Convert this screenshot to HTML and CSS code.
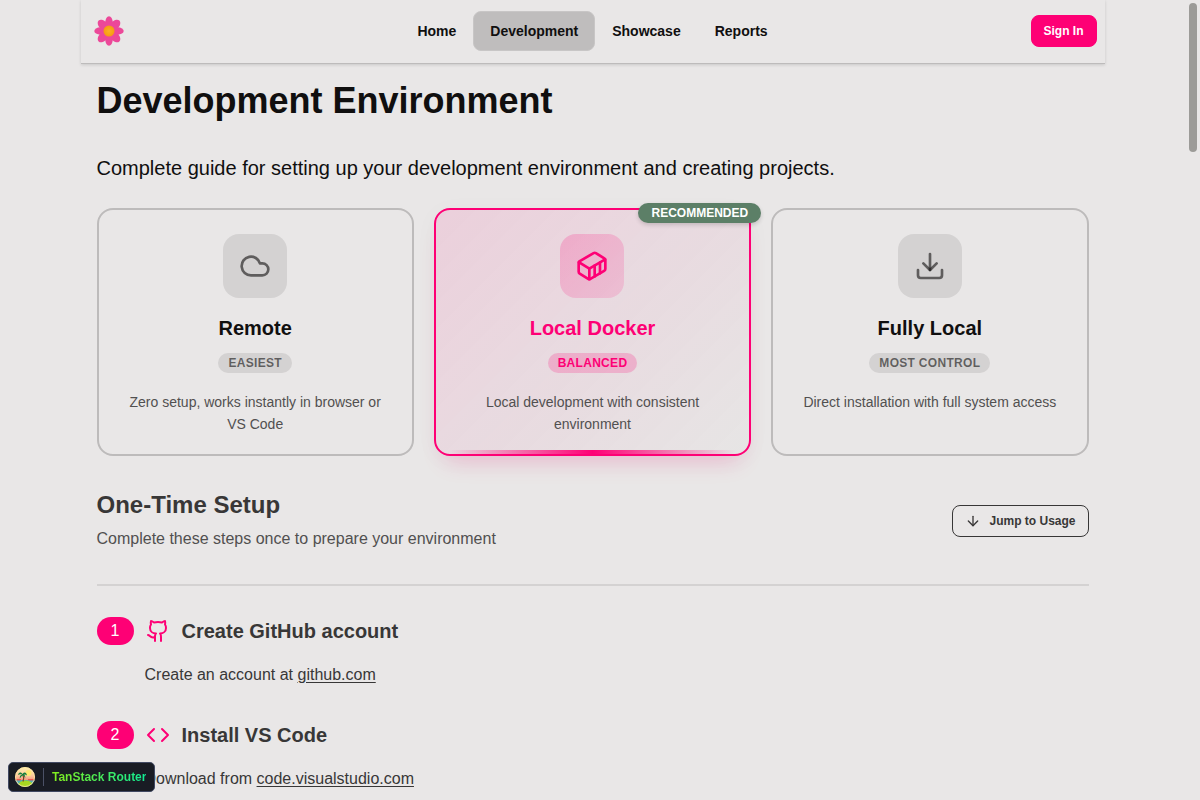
FILE: index.html
```html
<!DOCTYPE html>
<html lang="en">
<head>
<meta charset="utf-8">
<meta name="viewport" content="width=device-width, initial-scale=1">
<title>Development Environment</title>
<link rel="stylesheet" href="styles.css">
</head>
<body>
<div class="shell">
  <header class="navbar">
    <a class="logo" href="#" aria-label="Home page">
      <svg width="32" height="32" viewBox="0 0 32 32" aria-hidden="true">
        <defs>
          <radialGradient id="core"><stop offset="0" stop-color="#fbb024"/><stop offset="1" stop-color="#f79a12"/></radialGradient>
        </defs>
        <g fill="#ec4899">
          <ellipse cx="16" cy="7.300" rx="3.700" ry="6"/>
          <ellipse cx="16" cy="7.300" rx="4.200" ry="6" transform="rotate(45 16 16)"/>
          <ellipse cx="16" cy="7.300" rx="3.700" ry="6" transform="rotate(90 16 16)"/>
          <ellipse cx="16" cy="7.300" rx="4.200" ry="6" transform="rotate(135 16 16)"/>
          <ellipse cx="16" cy="7.300" rx="3.700" ry="6" transform="rotate(180 16 16)"/>
          <ellipse cx="16" cy="7.300" rx="4.200" ry="6" transform="rotate(225 16 16)"/>
          <ellipse cx="16" cy="7.300" rx="3.700" ry="6" transform="rotate(270 16 16)"/>
          <ellipse cx="16" cy="7.300" rx="4.200" ry="6" transform="rotate(315 16 16)"/>
          <circle cx="16" cy="16" r="10"/>
        </g>
        <circle cx="16" cy="16" r="5.500" fill="url(#core)"/>
      </svg>
    </a>
    <nav class="nav-links">
      <a class="nav-link" href="#">Home</a>
      <a class="nav-link nav-link-active" href="#" aria-current="page">Development</a>
      <a class="nav-link" href="#">Showcase</a>
      <a class="nav-link" href="#">Reports</a>
    </nav>
    <button class="sign-in" type="button">Sign In</button>
  </header>

  <main class="content">
    <h1 class="page-title">Development Environment</h1>
    <p class="lead">Complete guide for setting up your development environment and creating projects.</p>

    <div class="cards">
      <button class="card" type="button">
        <span class="card-icon">
          <svg class="icon" width="32" height="32" viewBox="0 0 24 24" aria-hidden="true"><path d="M17.5 19H9a7 7 0 1 1 6.71-9h1.79a4.5 4.5 0 1 1 0 9Z"/></svg>
        </span>
        <span class="card-title">Remote</span>
        <span class="tag">Easiest</span>
        <span class="card-text">Zero setup, works instantly in browser or VS Code</span>
      </button>
      <button class="card card-selected" type="button" aria-pressed="true">
        <span class="recommended">RECOMMENDED</span>
        <span class="card-icon">
          <svg class="icon" width="32" height="32" viewBox="0 0 24 24" aria-hidden="true"><path d="M22 7.7c0-.6-.4-1.2-.8-1.5l-6.3-3.9a1.72 1.72 0 0 0-1.7 0l-10.3 6c-.5.2-.9.8-.9 1.4v6.6c0 .5.4 1.2.8 1.5l6.3 3.9a1.72 1.72 0 0 0 1.7 0l10.3-6c.5-.3.9-1 .9-1.5Z"/><path d="M10 21.9V14L2.1 9.1"/><path d="m10 14 11.9-6.9"/><path d="M14 19.8v-8.1"/><path d="M18 17.5V9.4"/></svg>
        </span>
        <span class="card-title">Local Docker</span>
        <span class="tag">Balanced</span>
        <span class="card-text">Local development with consistent environment</span>
      </button>
      <button class="card" type="button">
        <span class="card-icon">
          <svg class="icon" width="32" height="32" viewBox="0 0 24 24" aria-hidden="true"><path d="M21 15v4a2 2 0 0 1-2 2H5a2 2 0 0 1-2-2v-4"/><path d="m7 10 5 5 5-5"/><path d="M12 15V3"/></svg>
        </span>
        <span class="card-title">Fully Local</span>
        <span class="tag">Most Control</span>
        <span class="card-text">Direct installation with full system access</span>
      </button>
    </div>

    <section>
      <div class="section-head">
        <div>
          <h2 class="section-title">One-Time Setup</h2>
          <p class="section-text">Complete these steps once to prepare your environment</p>
        </div>
        <button class="jump" type="button">
          <svg class="icon" width="16" height="16" viewBox="0 0 24 24" aria-hidden="true"><path d="M12 5v14"/><path d="m19 12-7 7-7-7"/></svg>
          Jump to Usage
        </button>
      </div>

      <div class="steps">
        <article class="step">
          <h3 class="step-title">
            <span class="step-number">1</span>
            <svg class="icon step-icon" width="24" height="24" viewBox="0 0 24 24" aria-hidden="true"><path d="M15 22v-4a4.8 4.8 0 0 0-1-3.5c3 0 6-2 6-5.5.08-1.25-.27-2.48-1-3.5.28-1.15.28-2.35 0-3.5 0 0-1 0-3 1.5-2.64-.5-5.36-.5-8 0C6 2 5 2 5 2c-.3 1.15-.3 2.35 0 3.5A5.403 5.403 0 0 0 4 9c0 3.5 3 5.5 6 5.5-.39.49-.68 1.05-.85 1.65-.17.6-.22 1.23-.15 1.85v4"/><path d="M9 18c-4.51 2-5-2-7-2"/></svg>
            Create GitHub account
          </h3>
          <p class="step-text">Create an account at <a class="link" href="#">github.com</a></p>
        </article>
        <article class="step">
          <h3 class="step-title">
            <span class="step-number">2</span>
            <svg class="icon step-icon" width="24" height="24" viewBox="0 0 24 24" aria-hidden="true"><path d="m16 18 6-6-6-6"/><path d="m8 6-6 6 6 6"/></svg>
            Install VS Code
          </h3>
          <p class="step-text">Download from <a class="link" href="#">code.visualstudio.com</a></p>
        </article>
      </div>
    </section>
  </main>
</div>

<button class="devtools" type="button">
  <svg width="20" height="20" viewBox="0 0 20 20" aria-hidden="true">
    <defs>
      <clipPath id="disc"><circle cx="10" cy="10" r="10"/></clipPath>
      <linearGradient id="sky" x1="0" y1="0" x2="0" y2="1"><stop offset="0" stop-color="#fff0b0"/><stop offset=".45" stop-color="#fcc79c"/><stop offset=".7" stop-color="#f58a78"/></linearGradient>
    </defs>
    <g clip-path="url(#disc)">
      <rect width="20" height="20" fill="url(#sky)"/>
      <circle cx="13.500" cy="6" r="3" fill="#ffe873"/>
      <rect y="13" width="20" height="7" fill="#4fb0b8"/>
      <path d="M1 12h5v1.500H1zM13 12h6v1.500h-6z" fill="#ea5a50"/>
      <ellipse cx="10.500" cy="17.500" rx="7" ry="4" fill="#a8d822"/>
      <path d="M8 14.500C9 12 8.800 9.500 7.800 7.500" fill="none" stroke="#7a3f24" stroke-width="1.200"/>
      <path d="M7.500 7C5.500 4.500 3.500 5.500 3 8c1.500-1 3-1 4.200-.4C5.500 8 4.500 9.500 4.800 11.500c1-1.500 2-2.800 3-3 1 .2 1.700 1.200 2.400 2.700.2-1.700-.2-2.900-1.200-3.600 1-.2 2 0 3 1C11.500 5.500 9.500 4.500 7.500 7Z" fill="#17803d"/>
    </g>
    <circle cx="10" cy="10" r="9.500" fill="none" stroke="#ffe9a0" stroke-opacity=".8"/>
  </svg>
  <span class="devtools-divider"></span>
  <span class="devtools-name">TanStack Router</span>
</button>
<div class="scroll-thumb" aria-hidden="true"></div>
</body>
</html>
```
FILE: styles.css
```css
:root {
  --base: #e9e7e7;
  --base-200: #d4d2d2;
  --base-300: #bdbbbb;
  --ink: #100f0f;
  --soft: #383737;
  --muted: rgba(16, 15, 15, 0.6);
  --primary: #fe0075;
  --accent: #5c7f67;
}

* {
  box-sizing: border-box;
}

body {
  margin: 0;
  padding-right: 15px;
  background: var(--base);
  color: var(--ink);
  font: 16px/24px "Liberation Sans", Arial, sans-serif;
}

h1, h2, h3, p {
  margin: 0;
}

button {
  font: inherit;
  color: inherit;
  cursor: pointer;
}

.icon {
  flex: none;
  fill: none;
  stroke: currentColor;
  stroke-width: 2;
  stroke-linecap: round;
  stroke-linejoin: round;
}

.shell {
  max-width: 1024px;
  margin: 0 auto;
}

.navbar {
  display: grid;
  grid-template-columns: 1fr auto 1fr;
  align-items: center;
  min-height: 64px;
  padding: 0 8px 1px;
  border-bottom: 1px solid var(--base-300);
  box-shadow: 0 1px 3px rgba(0, 0, 0, 0.14);
}

.logo {
  display: flex;
  justify-self: start;
  padding: 0 4px;
}

.nav-links {
  display: flex;
}

.nav-link {
  padding: 9px 16px;
  border: 1px solid transparent;
  border-radius: 8px;
  color: var(--ink);
  font-size: 14px;
  font-weight: 700;
  line-height: 20px;
  text-decoration: none;
}

.nav-link-active {
  border-color: #c8c6c6;
  background: #bfbdbd;
}

.sign-in {
  justify-self: end;
  height: 32px;
  padding: 0 12px;
  border: 1px solid var(--primary);
  border-radius: 8px;
  background: var(--primary);
  color: #fff;
  font-size: 12px;
  font-weight: 700;
}

.content {
  padding: 16px 16px 0;
}

.page-title {
  margin-bottom: 32px;
  font-size: 36px;
  line-height: 42px;
}

.lead {
  margin-bottom: 26px;
  font-size: 20px;
  line-height: 28px;
}

.cards {
  display: grid;
  grid-template-columns: repeat(3, minmax(0, 1fr));
  gap: 20px;
  margin-bottom: 33px;
}

.card {
  position: relative;
  display: flex;
  flex-direction: column;
  align-items: center;
  padding: 24px 24px 19px;
  border: 2px solid var(--base-300);
  border-radius: 16px;
  background: transparent;
  text-align: center;
}

.card-icon {
  display: grid;
  place-items: center;
  width: 64px;
  height: 64px;
  margin-bottom: 16px;
  border-radius: 16px;
  background: var(--base-200);
  color: var(--muted);
}

.card-title {
  margin-bottom: 11px;
  font-size: 20px;
  font-weight: 700;
  line-height: 28px;
}

.tag {
  margin-bottom: 18px;
  padding: 0 10px;
  border-radius: 10px;
  background: var(--base-200);
  color: var(--muted);
  font-size: 12px;
  font-weight: 700;
  line-height: 20px;
  letter-spacing: 0.025em;
  text-transform: uppercase;
}

.card-text {
  color: #515050;
  font-size: 14px;
  line-height: 22px;
}

.card-selected {
  border-color: var(--primary);
  background: linear-gradient(135deg, rgba(254, 0, 117, 0.1), rgba(92, 127, 103, 0.02));
  box-shadow: 0 16px 24px -12px rgba(254, 0, 117, 0.2), 0 4px 24px rgba(0, 0, 0, 0.03);
}

.card-selected::after {
  content: "";
  position: absolute;
  right: 12px;
  bottom: 0;
  left: 12px;
  height: 4px;
  background: linear-gradient(90deg, transparent, var(--primary), transparent);
}

.card-selected .card-icon {
  background: linear-gradient(135deg, rgba(254, 0, 117, 0.2), rgba(254, 0, 117, 0.13));
  color: var(--primary);
}

.card-selected .card-title {
  color: var(--primary);
}

.card-selected .tag {
  background: rgba(254, 0, 117, 0.2);
  color: var(--primary);
}

.recommended {
  position: absolute;
  top: -7px;
  right: -12px;
  padding: 0 13px;
  border-radius: 10px;
  background: var(--accent);
  box-shadow: 0 2px 4px rgba(0, 0, 0, 0.16);
  color: #fff;
  font-size: 12px;
  font-weight: 700;
  line-height: 20px;
}

.section-head {
  display: flex;
  align-items: center;
  justify-content: space-between;
  padding-bottom: 31px;
  border-bottom: 2px solid var(--base-200);
}

.section-title {
  margin-bottom: 6px;
  color: var(--soft);
  font-size: 24px;
  line-height: 32px;
}

.section-text {
  padding-bottom: 2px;
  color: #515050;
}

.jump {
  display: flex;
  align-items: center;
  gap: 8px;
  height: 32px;
  padding: 0 12px;
  border: 1px solid var(--soft);
  border-radius: 8px;
  background: transparent;
  color: var(--soft);
  font-size: 12px;
  font-weight: 700;
}

.steps {
  display: flex;
  flex-direction: column;
  gap: 34px;
  padding-top: 31px;
}

.step-title {
  display: flex;
  align-items: center;
  gap: 12px;
  color: var(--soft);
  font-size: 20px;
  line-height: 28px;
}

.step-number {
  min-width: 37px;
  border-radius: 14px;
  background: var(--primary);
  color: #fff;
  font-size: 16px;
  font-weight: 400;
  text-align: center;
}

.step-icon {
  color: var(--primary);
}

.step-text {
  padding: 18px 0 0 48px;
  color: var(--soft);
}

.link {
  color: inherit;
  text-underline-offset: 2px;
}

.devtools {
  position: fixed;
  bottom: 8px;
  left: 8px;
  display: flex;
  align-items: center;
  gap: 8px;
  height: 30px;
  padding: 0 8px 0 6px;
  border: 1px solid #414962;
  border-radius: 5px;
  background: #191c24;
}

.devtools-divider {
  width: 1px;
  height: 18px;
  background: #4b5166;
}

.devtools-name {
  background: linear-gradient(90deg, #84ec1c, #10eb94);
  background-clip: text;
  color: transparent;
  font-size: 12px;
  font-weight: 700;
}

.scroll-thumb {
  position: fixed;
  top: 3px;
  right: 3px;
  width: 8px;
  height: 149px;
  border-radius: 4px;
  background: #9c9b98;
}
```
